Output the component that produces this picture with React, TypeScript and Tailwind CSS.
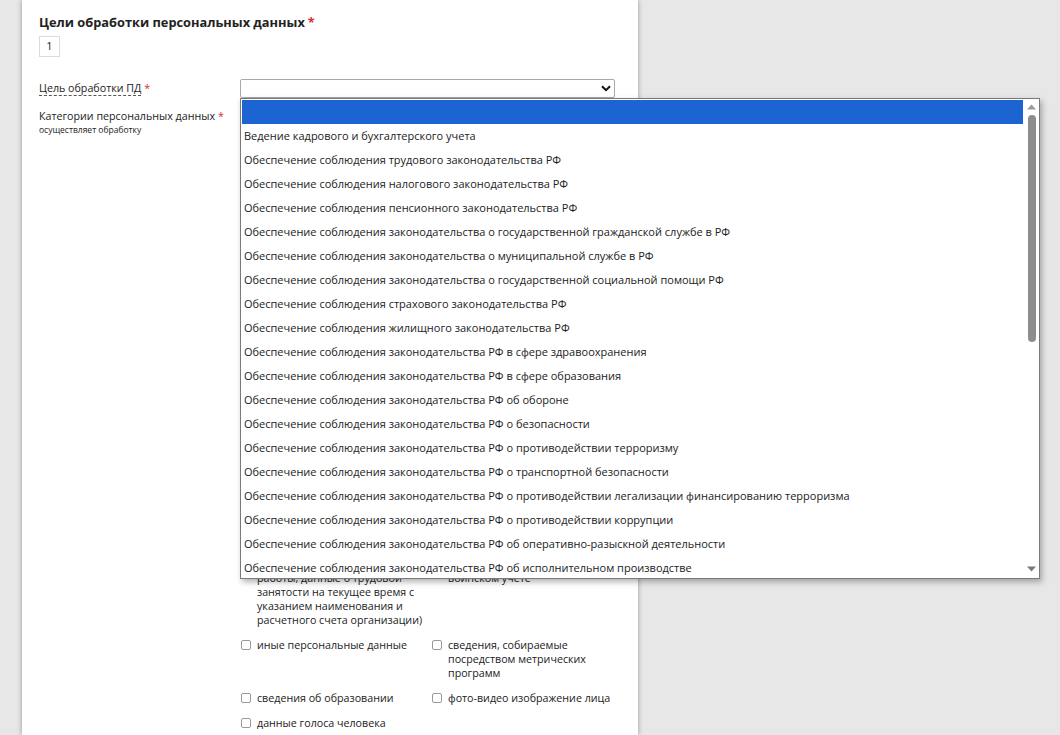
import React from "react";

const purposes = [
  "Ведение кадрового и бухгалтерского учета",
  "Обеспечение соблюдения трудового законодательства РФ",
  "Обеспечение соблюдения налогового законодательства РФ",
  "Обеспечение соблюдения пенсионного законодательства РФ",
  "Обеспечение соблюдения законодательства о государственной гражданской службе в РФ",
  "Обеспечение соблюдения законодательства о муниципальной службе в РФ",
  "Обеспечение соблюдения законодательства о государственной социальной помощи РФ",
  "Обеспечение соблюдения страхового законодательства РФ",
  "Обеспечение соблюдения жилищного законодательства РФ",
  "Обеспечение соблюдения законодательства РФ в сфере здравоохранения",
  "Обеспечение соблюдения законодательства РФ в сфере образования",
  "Обеспечение соблюдения законодательства РФ об обороне",
  "Обеспечение соблюдения законодательства РФ о безопасности",
  "Обеспечение соблюдения законодательства РФ о противодействии терроризму",
  "Обеспечение соблюдения законодательства РФ о транспортной безопасности",
  "Обеспечение соблюдения законодательства РФ о противодействии легализации финансированию терроризма",
  "Обеспечение соблюдения законодательства РФ о противодействии коррупции",
  "Обеспечение соблюдения законодательства РФ об оперативно-разыскной деятельности",
  "Обеспечение соблюдения законодательства РФ об исполнительном производстве",
  "Обеспечение соблюдения законодательства РФ о нотариате",
  "Обеспечение соблюдения законодательства РФ об адвокатской деятельности",
];

const categories: [string, string | null][] = [
  ["фамилия, имя, отчество", "год рождения"],
  ["месяц рождения", "дата рождения"],
  ["место рождения", "адрес"],
  ["семейное положение", "имущественное положение"],
  ["социальное положение", "образование"],
  ["профессия", "доходы"],
  ["паспортные данные", "ИНН"],
  ["СНИЛС", "номер телефона"],
  ["адрес электронной почты", "гражданство"],
  ["пол", "возраст"],
  ["должность", "стаж работы"],
  ["данные о детях", "сведения о браке"],
  ["банковские реквизиты", "номер лицевого счета"],
  ["сведения о судимости", "состояние здоровья"],
  ["национальная принадлежность", "религиозные убеждения"],
  ["политические взгляды", "биометрические данные"],
  ["номер полиса ОМС", "данные о наградах"],
  ["сведения о квалификации", "сведения о пенсии"],
  [
    "место работы (название места работы, данные о трудовой занятости на текущее время с указанием наименования и расчетного счета организации)",
    "сведения о постановке на воинском учете",
  ],
  ["иные персональные данные", "сведения, собираемые посредством метрических программ"],
  ["сведения об образовании", "фото-видео изображение лица"],
  ["данные голоса человека", null],
];

function Star() {
  return <span className="text-[#d32f2f] ml-[3px]">*</span>;
}

function Check({ label }: { label: string }) {
  return (
    <label className="flex items-start gap-[6px] leading-[14px]">
      <span className="mt-[2px] w-[10px] h-[10px] shrink-0 border border-[#9a9a9a] rounded-[2px] bg-white" />
      <span>{label}</span>
    </label>
  );
}

function Dropdown() {
  return (
    <div className="absolute left-0 top-[19px] w-[800px] h-[481px] bg-white border border-[#7a7a7a] shadow-[2px_3px_6px_rgba(0,0,0,0.3)] flex z-10">
      <div className="flex-1 overflow-hidden">
        <div className="h-[24px] bg-[#1b64d1] mt-[1px] mx-[1px]" />
        {purposes.map((p) => (
          <div key={p} className="h-[24px] flex items-center px-[3px] text-[11px] text-[#222] whitespace-nowrap">
            {p}
          </div>
        ))}
      </div>
      <div className="w-[15px] flex flex-col items-center pt-[5px] pb-[6px]">
        <svg width="9" height="6" viewBox="0 0 9 6">
          <path d="M0 5.5 L4.5 0.5 L9 5.5 Z" fill="#9a9a9a" />
        </svg>
        <div className="mt-[5px] w-[8px] h-[227px] rounded-full bg-[#8d8d8d]" />
        <div className="flex-1" />
        <svg width="9" height="6" viewBox="0 0 9 6">
          <path d="M0 0.5 L4.5 5.5 L9 0.5 Z" fill="#7a7a7a" />
        </svg>
      </div>
    </div>
  );
}

export default function App() {
  return (
    <div className="h-[735px] w-[1060px] overflow-hidden bg-[#e7e7e7] font-['Open_Sans',sans-serif] text-[#222]">
      <div className="ml-[22px] w-[616px] min-h-[735px] bg-white shadow-[0_0_5px_rgba(0,0,0,0.35)] pl-[17px] pt-[12px]">
        <h2 className="text-[12.8px] font-bold leading-[20px]">
          Цели обработки персональных данных
          <Star />
        </h2>
        <div className="mt-[4px] w-[21px] h-[21px] border border-[#dcdcdc] flex items-center justify-center text-[11px]">
          1
        </div>

        <div className="mt-[22px] grid grid-cols-[201px_375px] gap-y-[9px]">
          <div className="text-[10.7px] leading-[18px]">
            <span className="border-b border-dashed border-[#555]">Цель обработки ПД</span>
            <Star />
          </div>
          <div className="relative">
            <div className="h-[19px] border border-[#a9a9a9] rounded-[2px] bg-white flex items-center justify-end pr-[3px]">
              <svg width="10" height="7" viewBox="0 0 10 7">
                <path d="M1 1.2 L5 5.2 L9 1.2" fill="none" stroke="#111" strokeWidth="2" />
              </svg>
            </div>
            <Dropdown />
          </div>

          <div>
            <div className="text-[10.7px] leading-[16px] pt-[1px]">
              Категории персональных данных
              <Star />
            </div>
            <div className="text-[8.5px] leading-[12px]">осуществляет обработку</div>
          </div>
          <div className="grid grid-cols-[191px_183px] gap-y-[11px] pl-[1px] text-[10.7px]">
            {categories.map(([a, b]) => (
              <React.Fragment key={a}>
                <Check label={a} />
                {b ? <Check label={b} /> : <div />}
              </React.Fragment>
            ))}
          </div>
        </div>
      </div>
    </div>
  );
}
